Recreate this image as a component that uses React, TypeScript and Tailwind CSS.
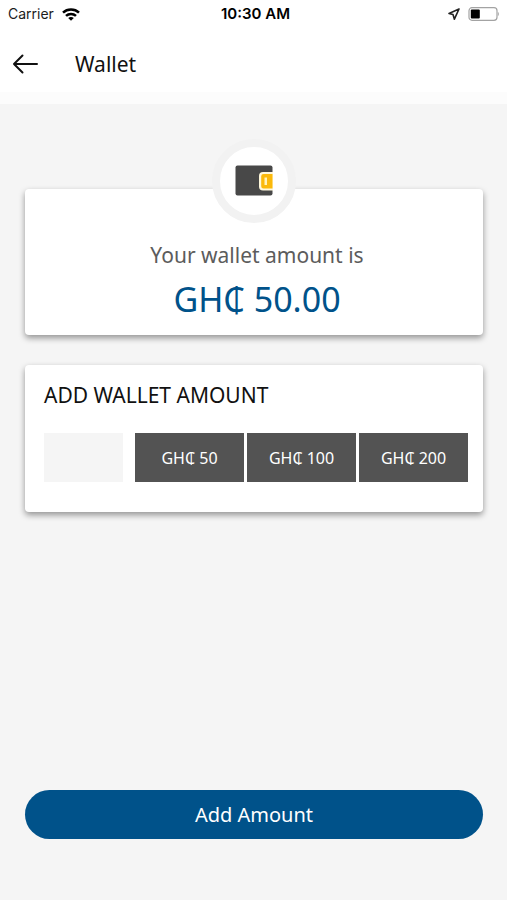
const AMOUNTS = [50, 100, 200];

function StatusBar() {
  return (
    <div className="grid h-7 grid-cols-3 items-center px-2 font-['Inter',sans-serif] text-sm text-[#1c1c1c]">
      <div className="flex items-center gap-2">
        <span>Carrier</span>
        <svg width="18" height="13" viewBox="0 0 18 13" fill="none" stroke="#000" strokeWidth="2.5" aria-label="Wi-Fi">
          <path d="M1 4.7C5.4.5 12.6.5 17 4.7" />
          <path d="M4 7.9c2.8-2.7 7.2-2.7 10 0" />
          <path d="M6.2 10.1c1.6-1.4 4-1.4 5.6 0L9 12.8z" fill="#000" stroke="none" />
        </svg>
      </div>
      <span className="pl-1 text-center text-[15px] font-semibold whitespace-nowrap text-black">10:30 AM</span>
      <div className="flex items-center justify-end gap-2">
        <svg width="12" height="12" viewBox="0 0 12 12" fill="none" stroke="#222" strokeWidth="1.6" strokeLinejoin="round" aria-label="Location">
          <path d="M11 1 1 5.400l4 1.200 1.400 4.600z" />
        </svg>
        <svg width="31" height="14" viewBox="0 0 31 14" fill="none" aria-label="Battery">
          <rect x="1" y="0.7" width="28" height="12.6" rx="3" stroke="#a3a3a3" strokeWidth="1.2" />
          <rect x="2.800" y="2.6" width="9" height="8.8" rx="1" fill="#000" />
          <path d="M29.9 5v4c1.200-.6 1.200-3.4 0-4z" fill="#a3a3a3" />
        </svg>
      </div>
    </div>
  );
}

function WalletIcon() {
  return (
    <svg width="38" height="32" viewBox="0 0 38 32" aria-hidden="true">
      <rect x="0.5" y="0.5" width="37" height="30" rx="2" fill="#484848" />
      <path d="M38 7H28a4 4 0 0 0-4 4v10.500a4 4 0 0 0 4 4h10z" fill="#fff8dc" />
      <path d="M37.5 9H28.500a2.300 2.300 0 0 0-2.300 2.300v10a2.300 2.300 0 0 0 2.300 2.300h9z" fill="#fbb90b" />
      <rect x="29.500" y="12.500" width="2.500" height="7.500" fill="#fff3bd" />
    </svg>
  );
}

export default function App() {
  return (
    <div className="flex min-h-screen flex-col bg-[#f5f5f5] font-['Noto_Sans',sans-serif] text-[#111]">
      <header className="border-b-12 border-[#fcfcfc] bg-white">
        <StatusBar />
        <div className="flex h-16 items-center gap-9 px-3 pt-2">
          <button type="button" aria-label="Back">
            <svg width="27" height="20" viewBox="0 0 27 20" fill="none" stroke="#111" strokeWidth="2" strokeLinecap="round" strokeLinejoin="round">
              <path d="M25 10H2M10.500 1.500 2 10l8.500 8.500" />
            </svg>
          </button>
          <h1 className="text-[21px] leading-6">Wallet</h1>
        </div>
      </header>

      <main className="flex grow flex-col pt-9 pr-6 pb-[61px] pl-[25px]">
        <section className="mt-[49px] rounded-sm bg-white pb-[18px] text-center shadow-[0_3px_6px_#00000066]">
          <div className="mx-auto -mt-[50px] flex size-21 items-center justify-center rounded-full border-8 border-[#f2f2f2] bg-white">
            <WalletIcon />
          </div>
          <div className="mt-[18px] pl-1.5">
            <p className="text-[21px] leading-7 text-[#5c5c5c]">Your wallet amount is</p>
            <p className="mt-3 text-[34px] leading-9 text-[#00528a]">GH₵ 50.00</p>
          </div>
        </section>

        <section className="mt-[30px] rounded-sm bg-white pt-4 pr-[15px] pb-[30px] pl-[19px] shadow-[0_3px_6px_#00000066]">
          <h2 className="text-[21px] leading-7">
            <label htmlFor="amount">ADD WALLET AMOUNT</label>
          </h2>
          <div className="mt-6 flex gap-3">
            <input id="amount" inputMode="decimal" className="h-[49px] w-[79px] bg-[#f5f5f5] px-2 text-base" />
            <div className="grid grow grid-cols-3 gap-[3px]">
              {AMOUNTS.map((amount) => (
                <button key={amount} type="button" className="h-[49px] bg-[#535353] text-base text-white">
                  GH₵ {amount}
                </button>
              ))}
            </div>
          </div>
        </section>

        <button type="button" className="mt-auto h-[49px] rounded-full bg-[#00528a] text-xl text-white">
          Add Amount
        </button>
      </main>
    </div>
  );
}
